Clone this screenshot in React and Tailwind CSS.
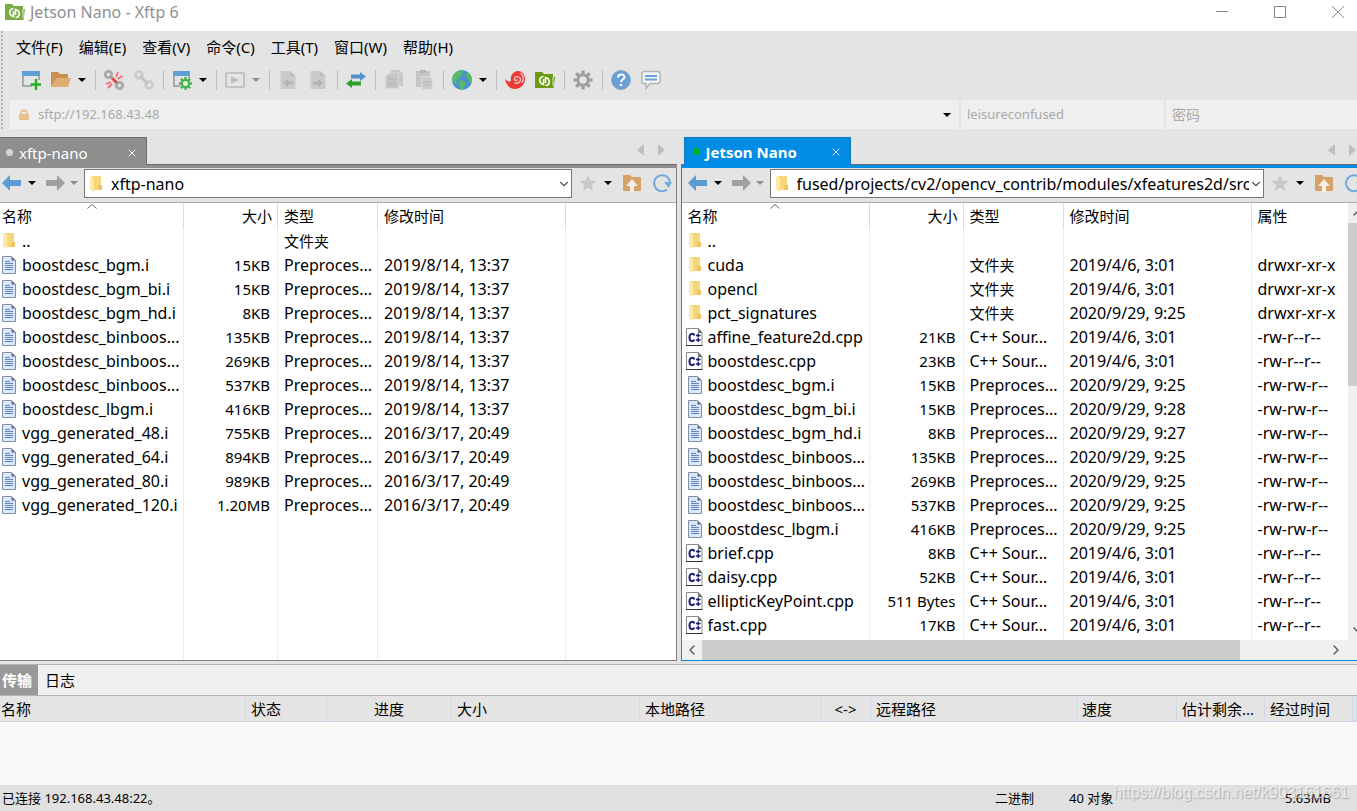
import { ChevronDown, ChevronLeft, ChevronRight, ChevronUp, X } from "lucide-react";

const menus = ["文件(F)", "编辑(E)", "查看(V)", "命令(C)", "工具(T)", "窗口(W)", "帮助(H)"];

const DIR = "文件夹";
const PRE = "Preproces...";
const CPP = "C++ Sour...";

const localFiles = [
  ["folder", "..", "", DIR, ""],
  ["text", "boostdesc_bgm.i", "15KB", PRE, "2019/8/14, 13:37"],
  ["text", "boostdesc_bgm_bi.i", "15KB", PRE, "2019/8/14, 13:37"],
  ["text", "boostdesc_bgm_hd.i", "8KB", PRE, "2019/8/14, 13:37"],
  ["text", "boostdesc_binboos...", "135KB", PRE, "2019/8/14, 13:37"],
  ["text", "boostdesc_binboos...", "269KB", PRE, "2019/8/14, 13:37"],
  ["text", "boostdesc_binboos...", "537KB", PRE, "2019/8/14, 13:37"],
  ["text", "boostdesc_lbgm.i", "416KB", PRE, "2019/8/14, 13:37"],
  ["text", "vgg_generated_48.i", "755KB", PRE, "2016/3/17, 20:49"],
  ["text", "vgg_generated_64.i", "894KB", PRE, "2016/3/17, 20:49"],
  ["text", "vgg_generated_80.i", "989KB", PRE, "2016/3/17, 20:49"],
  ["text", "vgg_generated_120.i", "1.20MB", PRE, "2016/3/17, 20:49"],
];

const remoteFiles = [
  ["folder", "..", "", "", "", ""],
  ["folder", "cuda", "", DIR, "2019/4/6, 3:01", "drwxr-xr-x"],
  ["folder", "opencl", "", DIR, "2019/4/6, 3:01", "drwxr-xr-x"],
  ["folder", "pct_signatures", "", DIR, "2020/9/29, 9:25", "drwxr-xr-x"],
  ["cpp", "affine_feature2d.cpp", "21KB", CPP, "2019/4/6, 3:01", "-rw-r--r--"],
  ["cpp", "boostdesc.cpp", "23KB", CPP, "2019/4/6, 3:01", "-rw-r--r--"],
  ["text", "boostdesc_bgm.i", "15KB", PRE, "2020/9/29, 9:25", "-rw-rw-r--"],
  ["text", "boostdesc_bgm_bi.i", "15KB", PRE, "2020/9/29, 9:28", "-rw-rw-r--"],
  ["text", "boostdesc_bgm_hd.i", "8KB", PRE, "2020/9/29, 9:27", "-rw-rw-r--"],
  ["text", "boostdesc_binboos...", "135KB", PRE, "2020/9/29, 9:25", "-rw-rw-r--"],
  ["text", "boostdesc_binboos...", "269KB", PRE, "2020/9/29, 9:25", "-rw-rw-r--"],
  ["text", "boostdesc_binboos...", "537KB", PRE, "2020/9/29, 9:25", "-rw-rw-r--"],
  ["text", "boostdesc_lbgm.i", "416KB", PRE, "2020/9/29, 9:25", "-rw-rw-r--"],
  ["cpp", "brief.cpp", "8KB", CPP, "2019/4/6, 3:01", "-rw-r--r--"],
  ["cpp", "daisy.cpp", "52KB", CPP, "2019/4/6, 3:01", "-rw-r--r--"],
  ["cpp", "ellipticKeyPoint.cpp", "511 Bytes", CPP, "2019/4/6, 3:01", "-rw-r--r--"],
  ["cpp", "fast.cpp", "17KB", CPP, "2019/4/6, 3:01", "-rw-r--r--"],
];

function Svg({ size = 20, children }) {
  return (
    <svg width={size} height={size} viewBox={`0 0 ${size} ${size}`} fill="none" className="shrink-0" aria-hidden="true">
      {children}
    </svg>
  );
}

function Gear({ cx, cy, r, color, hole }) {
  return (
    <g>
      {[0, 45, 90, 135, 180, 225, 270, 315].map((a) => (
        <rect key={a} x={cx - r * 0.18} y={cy - r} width={r * 0.36} height={r * 0.5} fill={color} transform={`rotate(${a} ${cx} ${cy})`} />
      ))}
      <circle cx={cx} cy={cy} r={r * 0.54} stroke={color} strokeWidth={r * 0.3} fill={hole} />
    </g>
  );
}

function NewSessionIcon() {
  return (
    <Svg>
      <path d="M2 5v11h9M18 5v5" stroke="#a6a8ab" strokeWidth="2" />
      <rect x="1" y="1" width="18" height="5" fill="#5f9fd6" />
      <path d="M15 9v11M9.500 14.500H20" stroke="#22b022" strokeWidth="2.400" />
    </Svg>
  );
}

function OpenIcon() {
  return (
    <Svg>
      <path d="M0 2h7l2 2h8v4H6L0 17z" fill="#c8914f" />
      <path d="M5 8h15l-3 9H0z" fill="#dfae72" />
    </Svg>
  );
}

function DisconnectIcon() {
  return (
    <Svg>
      <circle cx="4.500" cy="4.500" r="3.200" stroke="#a9a9a9" strokeWidth="2.800" />
      <circle cx="15.500" cy="15.500" r="3.200" stroke="#a9a9a9" strokeWidth="2.800" />
      <path d="M6 6l3 3M11 11l3 3" stroke="#9c9c9c" strokeWidth="2.600" />
      <path d="M8.500 8.500l4 4" stroke="#e8404a" strokeWidth="3" />
      <path d="M12 7l2-5M13.500 9l5-3M7 12l-5 2M8 14l-4 4" stroke="#ee6b73" strokeWidth="1.800" />
    </Svg>
  );
}

function LinkIcon() {
  return (
    <Svg>
      <circle cx="5" cy="5" r="3.500" stroke="#cacaca" strokeWidth="2.500" />
      <circle cx="15" cy="15" r="3.500" stroke="#cacaca" strokeWidth="2.500" />
      <path d="M6 6l8 8" stroke="#c0c0c0" strokeWidth="2.800" />
    </Svg>
  );
}

function PropertiesIcon() {
  return (
    <Svg>
      <path d="M2 5v11h6M17 5v3" stroke="#a6a8ab" strokeWidth="2" />
      <rect x="1" y="1" width="17" height="5" fill="#5f9fd6" />
      <Gear cx={13.500} cy={13.500} r={6.500} color="#43b14b" hole="#e8f3e8" />
    </Svg>
  );
}

function PlayIcon() {
  return (
    <Svg>
      <rect x="1" y="3" width="18" height="14" rx="1" stroke="#c2c2c2" strokeWidth="2" />
      <path d="M6 6.500l8 3.500-8 3.500z" fill="#bcbcbc" />
    </Svg>
  );
}

function FileArrowIcon({ right }) {
  return (
    <Svg>
      <path d="M2.500 1h9.500l5.500 5v13h-15z" fill="#cacaca" />
      <path d="M12 1v5h5.500" fill="#bcbcbc" />
      {right ? (
        <path d="M5 11.500h5v-3l5 4.500-5 4.500v-3H5z" fill="#b3b3b3" />
      ) : (
        <path d="M15 11.500h-5v-3L5 13l5 4.500v-3h5z" fill="#b3b3b3" />
      )}
    </Svg>
  );
}

function TransferIcon() {
  return (
    <Svg>
      <path d="M5 4.500h9V2l6 4.500-6 4.500V8.500H5z" fill="#5590d0" />
      <path d="M15 11.500H6V9l-6 4.500L6 18v-2.500h9z" fill="#2ba32b" />
    </Svg>
  );
}

function CopyIcon() {
  return (
    <Svg>
      <path d="M7 0h8l4 4v12H7z" fill="#c8c8c8" />
      <path d="M1.500 7l4-4h9v15.500h-13z" fill="#c6c6c6" stroke="#d8d8d8" />
      <path d="M4 9h8M4 12h8M4 15h8" stroke="#b4b4b4" />
    </Svg>
  );
}

function PasteIcon() {
  return (
    <Svg>
      <path d="M2 1h14v16H2z" fill="#c6c6c6" />
      <path d="M6 0h6v3H6z" fill="#b6b6b6" />
      <path d="M7.500 6.500h8l3 3v10h-11z" fill="#cbcbcb" stroke="#dedede" />
      <path d="M10 12h6M10 15h6" stroke="#b4b4b4" />
    </Svg>
  );
}

function GlobeIcon() {
  return (
    <Svg>
      <circle cx="10" cy="10" r="10" fill="#4d8fd1" />
      <path d="M3 3C6 0 9 0 11 .500L10 3l1 2-3 1-1 3-3 1 1 2-2 2C-1 10 0 6 3 3z" fill="#55bb66" />
      <path d="M8 10l4 1 2 3-2 3-1 3H9l-1-4-2-2zM14 3l3 0c2 2 3 5 3 7l-2 3-2-2 0-3-2-2z" fill="#55bb66" />
    </Svg>
  );
}

function ShellIcon() {
  return (
    <Svg>
      <path d="M0 9c2 2 4 3 6 2-1-5 2-10 7-10 4 0 7 3 7 8 0 6-5 10-10 10S1 15 0 9z" fill="#ee3a33" />
      <path
        d="M9.500 12.500c2 2 6 0 6-3s-5-4-6-1c-.500 2 2 3 3 1M15.500 3c3 2 4 7 1 10"
        stroke="#f3d2d0"
        strokeWidth="1.200"
      />
    </Svg>
  );
}

function XftpIcon({ color = "#6a9a14" }) {
  return (
    <Svg>
      <path d="M0 2h7l2 2h9v3h2l-1.500 11H0z" fill={color} />
      <path d="M18 7v9" stroke="#e4ecd4" />
      <path d="M8.500 6.500c-5 .500-5 7 0 8V9M10.500 15.500c5-.500 5-7 0-8V13" stroke="#fff" strokeWidth="1.600" />
    </Svg>
  );
}

function HelpIcon() {
  return (
    <Svg>
      <circle cx="10" cy="10" r="9.500" fill="#6a9fd6" stroke="#88a8cc" />
      <path d="M7 7.500c0-4 6.500-4 6.500-.500 0 2.500-3.500 2.300-3.500 5" stroke="#fff" strokeWidth="2" />
      <circle cx="10" cy="15" r="1.300" fill="#fff" />
    </Svg>
  );
}

function ChatIcon() {
  return (
    <Svg>
      <path d="M2 1.500h16l1 1.500v9l-1 1.500h-9l-4 5v-5H2L1 12V3z" fill="#f3f5f7" stroke="#b2b4b6" strokeWidth="1.500" />
      <path d="M4 6h12M4 9.500h12" stroke="#69a3dc" strokeWidth="2" />
    </Svg>
  );
}

function LockIcon() {
  return (
    <svg width="12" height="12" viewBox="0 0 12 12" fill="none" className="shrink-0" aria-hidden="true">
      <path d="M3 6V4c0-3.500 6-3.500 6 0v2" stroke="#e8c08a" strokeWidth="1.600" />
      <rect x="1" y="5" width="10" height="6" rx="1" fill="#e8c08a" />
    </svg>
  );
}

function FileIcon({ kind }) {
  if (kind === "folder") {
    return (
      <Svg size={18}>
        <path d="M5 1h9v10l1 4H5z" fill="#f7d678" />
        <path d="M12 10h3v5h-4z" fill="#ecc35c" />
        <path d="M3 1l4 2v14l-4-2z" fill="#fde9a9" />
      </Svg>
    );
  }
  if (kind === "cpp") {
    return (
      <Svg size={18}>
        <path d="M.500.500h12l3.500 4v13H.500z" fill="#fff" stroke="#8a8a8a" />
        <path d="M12 0l4.500 5H12z" fill="#777" />
        <path d="M0 17.500h16.500" stroke="#333" />
        <path d="M8.500 7.500c-1-2.500-5-2.500-5 2s4 4.500 5 2" stroke="#1b1b7a" strokeWidth="2" />
        <path d="M10 7.500h4.500M12.200 5.500v4M10 12h4.500M12.200 10v4" stroke="#1b1b7a" strokeWidth="1.400" />
      </Svg>
    );
  }
  return (
    <Svg size={18}>
      <path d="M2.500.500h9l4 4v13h-13z" fill="#dce7f5" stroke="#7f8fa8" />
      <path d="M11.500.500v4h4z" fill="#5d6c86" />
      <path d="M5 5.500h5M5 7.500h8M5 9.500h8M5 11.500h8M5 13.500h8" stroke="#5b86c8" />
    </Svg>
  );
}

function Caret({ color = "#000" }) {
  return (
    <svg width="8" height="4" viewBox="0 0 8 4" className="shrink-0" aria-hidden="true">
      <path d="M0 0h8L4 4z" fill={color} />
    </svg>
  );
}

function Tool({ label, children }) {
  return (
    <button aria-label={label} className="flex w-[30px] items-center justify-center">
      {children}
    </button>
  );
}

function ToolCaret({ label, color }) {
  return (
    <button aria-label={label} className="flex h-5 w-[15px] items-center pl-0.5">
      <Caret color={color} />
    </button>
  );
}

function Separator() {
  return (
    <div className="flex h-5 w-2 justify-center">
      <div className="w-px bg-[#bcbcbc]" />
    </div>
  );
}

function Toolbar() {
  return (
    <div className="flex h-9 items-center pl-3">
      <Tool label="新建"><NewSessionIcon /></Tool>
      <Tool label="打开"><OpenIcon /></Tool>
      <ToolCaret label="打开选项" />
      <Separator />
      <Tool label="断开"><DisconnectIcon /></Tool>
      <Tool label="重新连接"><LinkIcon /></Tool>
      <Separator />
      <Tool label="属性"><PropertiesIcon /></Tool>
      <ToolCaret label="属性选项" />
      <Separator />
      <Tool label="运行"><PlayIcon /></Tool>
      <ToolCaret label="运行选项" color="#8c8c8c" />
      <Separator />
      <Tool label="传输到左侧"><FileArrowIcon /></Tool>
      <Tool label="传输到右侧"><FileArrowIcon right /></Tool>
      <Separator />
      <Tool label="同步"><TransferIcon /></Tool>
      <Separator />
      <Tool label="复制"><CopyIcon /></Tool>
      <Tool label="粘贴"><PasteIcon /></Tool>
      <Separator />
      <Tool label="语言"><GlobeIcon /></Tool>
      <ToolCaret label="语言选项" />
      <Separator />
      <Tool label="Xshell"><ShellIcon /></Tool>
      <Tool label="Xftp"><XftpIcon /></Tool>
      <Separator />
      <Tool label="选项"><Svg><Gear cx={10} cy={10} r={9.500} color="#9f9f9f" hole="#e4e4e4" /></Svg></Tool>
      <Separator />
      <Tool label="帮助"><HelpIcon /></Tool>
      <Tool label="反馈"><ChatIcon /></Tool>
    </div>
  );
}

function AddressBar() {
  return (
    <div className="mt-0.5 flex h-[29px] gap-0.5 pl-1.5 text-[13px] text-[#a9a9a9]">
      <label className="flex flex-1 items-center bg-[#efefef] pl-2">
        <LockIcon />
        <input aria-label="主机" defaultValue="sftp://192.168.43.48" className="ml-2 min-w-0 flex-1 outline-none" />
        <button aria-label="历史记录" className="flex w-6 justify-center">
          <Caret />
        </button>
      </label>
      <input aria-label="用户名" defaultValue="leisureconfused" className="w-[203px] bg-[#efefef] px-1.5 outline-none" />
      <input aria-label="密码" placeholder="密码" className="w-[191px] bg-[#efefef] px-1.5 text-[14px] outline-none placeholder:text-[#a9a9a9]" />
    </div>
  );
}

function TabArrows() {
  return (
    <div className="ml-auto flex gap-[14px] self-center pt-1.5 pr-3">
      <button aria-label="上一个标签">
        <svg width="7" height="12" viewBox="0 0 7 12"><path d="M7 0v12L0 6z" fill="#bfbfbf" /></svg>
      </button>
      <button aria-label="下一个标签">
        <svg width="7" height="12" viewBox="0 0 7 12"><path d="M0 0v12l7-6z" fill="#bfbfbf" /></svg>
      </button>
    </div>
  );
}

function NavBar({ path, remote }) {
  return (
    <div className={`flex h-[35px] items-start border-b border-[#adadad] pt-px ${remote ? "pl-1.5" : "pl-0.5"}`}>
      <div className="flex h-[28px] items-center">
        <button aria-label="后退">
          <Svg>
            <path d="M0 10l8-8v5h11v6H8v5z" fill="#5b9bd5" />
          </Svg>
        </button>
        <button aria-label="后退历史" className="ml-1.5"><Caret /></button>
        <button aria-label="前进" className="ml-2.5">
          <Svg>
            <path d="M19 10l-8-8v5H0v6h11v5z" fill="#a0a0a0" />
          </Svg>
        </button>
        <button aria-label="前进历史" className="ml-1"><Caret color="#8c8c8c" /></button>
      </div>
      <label className="ml-1.5 flex h-[29px] min-w-0 flex-1 items-center border border-[#777] bg-white pl-0.5">
        <FileIcon kind="folder" />
        <input aria-label="路径" defaultValue={path} className="ml-1.5 min-w-0 flex-1 text-[16px] text-black outline-none" />
        <button aria-label="路径列表" className="flex w-[14px] justify-center">
          <ChevronDown size={14} strokeWidth={2} color="#555" />
        </button>
      </label>
      <div className="flex h-[28px] items-center pl-1.5">
        <button aria-label="收藏">
          <Svg>
            <path d="M10 2l2.400 5.600 6 .400-4.600 4 1.500 6-5.300-3.300L4.700 18l1.500-6L1.600 8l6-.400z" fill="#c8c8c8" />
          </Svg>
        </button>
        <button aria-label="收藏列表" className="ml-1.5"><Caret /></button>
        <button aria-label="上级目录" className="ml-2.5">
          <Svg>
            <path d="M1 2h7l2 2h9v14H1z" fill="#d6a268" />
            <path d="M10 6l6 7h-4v6H8v-6H4z" fill="#f3eee6" />
          </Svg>
        </button>
        <button aria-label="刷新" className="ml-2.5">
          <Svg>
            <path d="M15 16.500A8 8 0 1 1 18 9" stroke="#72a9de" strokeWidth="2" />
            <path d="M12 9h8l-3.500 6z" fill="#72a9de" />
          </Svg>
        </button>
        <div className="w-1" />
      </div>
    </div>
  );
}

function FileTable({ files, remote }) {
  const line = "border-r border-[#e6eff8]";
  const headLine = "border-r border-[#dcdcdc]";
  return (
    <table className="h-full w-full table-fixed border-separate border-spacing-0 bg-white text-[15px] leading-6 whitespace-nowrap">
      <colgroup>
        <col className={remote ? "w-[188px]" : "w-[184px]"} />
        <col className="w-[94px]" />
        <col className="w-[100px]" />
        <col className="w-[188px]" />
        <col />
      </colgroup>
      <thead>
        <tr className="h-[26px] text-left">
          <th className={`relative font-normal ${remote ? "pl-1.5" : "pl-0.5"} ${headLine}`}>
            名称
            <svg width="10" height="5" viewBox="0 0 10 5" className="absolute top-px left-1/2 -translate-x-1/2" aria-hidden="true">
              <path d="M.500 4.500L5 .500l4.500 4" fill="none" stroke="#666" />
            </svg>
          </th>
          <th className={`pr-[5px] text-right font-normal ${headLine}`}>大小</th>
          <th className={`pl-1.5 font-normal ${headLine}`}>类型</th>
          <th className={`pl-1.5 font-normal ${headLine}`}>修改时间</th>
          <th className="pl-1.5 font-normal">{remote && "属性"}</th>
        </tr>
      </thead>
      <tbody>
        {files.map(([kind, name, size, type, date, attr], i) => (
          <tr key={i} className="h-6">
            <td className={`${line} ${remote ? "pl-1" : ""}`}>
              <div className="flex items-center gap-1 text-[16px] leading-6">
                <FileIcon kind={kind} />
                {name}
              </div>
            </td>
            <td className={`pr-[7px] text-right ${line}`}>{size}</td>
            <td className={`pl-1.5 ${line} ${type === DIR ? "" : "text-[16px]"}`}>{type}</td>
            <td className={`pl-1.5 text-[16px] ${line}`}>{date}</td>
            <td className="pl-1.5 text-[16px]">{attr}</td>
          </tr>
        ))}
        <tr>
          <td className={line} />
          <td className={line} />
          <td className={line} />
          <td className={line} />
          <td />
        </tr>
      </tbody>
    </table>
  );
}

function LocalPane() {
  return (
    <section className="flex min-w-0 flex-1 flex-col">
      <div className="flex h-[35px] items-end">
        <div className="relative -mb-px flex h-7 w-[147px] items-center border-t border-r border-[#6e6e6e] bg-[#8e8e8e] pt-0.5 pr-2 pl-1.5 text-white">
          <span className="mr-1.5 size-[7px] rounded-full bg-[#d4d4d4]" />
          <button className="text-[15px] leading-6">xftp-nano</button>
          <button aria-label="关闭" className="ml-auto"><X size={12} strokeWidth={2} /></button>
        </div>
        <TabArrows />
      </div>
      <div className="h-1 border-t border-[#6e6e6e] bg-[#8e8e8e]" />
      <div className="flex min-h-0 flex-1 flex-col border-r border-b border-[#808080]">
        <NavBar path="xftp-nano" />
        <div className="min-h-0 flex-1 bg-white">
          <FileTable files={localFiles} />
        </div>
      </div>
    </section>
  );
}

function RemotePane() {
  return (
    <section className="flex min-w-0 flex-1 flex-col overflow-hidden">
      <div className="flex min-h-0 min-w-[687px] flex-1 flex-col">
        <div className="flex h-[35px] items-end pl-[3px]">
          <div className="relative -mb-px flex h-7 w-[167px] items-center border border-b-0 border-[#1577bd] bg-[#008be5] pr-2 pl-2 text-white">
            <span className="mr-1.5 size-[7px] rounded-full bg-[#00b818]" />
            <button className="text-[15px] leading-6 font-bold">Jetson Nano</button>
            <button aria-label="关闭" className="ml-auto"><X size={12} strokeWidth={2} /></button>
          </div>
          <TabArrows />
        </div>
        <div className="h-1 border-t border-[#6e6e6e] bg-[#008be5]" />
        <div className="flex min-h-0 flex-1 flex-col border-b border-l border-b-[#008be5] border-l-[#707070]">
          <NavBar path="fused/projects/cv2/opencv_contrib/modules/xfeatures2d/src" remote />
          <div className="flex min-h-0 flex-1">
            <div className="min-w-0 flex-1 bg-white">
              <FileTable files={remoteFiles} remote />
            </div>
            <div className="flex w-5 flex-col items-center bg-[#f0f0f0]">
              <ChevronUp size={16} className="my-0.5" color="#555" />
              <div className="h-[163px] w-full bg-[#cdcdcd]" />
              <ChevronDown size={16} className="mt-auto mb-0.5" color="#555" />
            </div>
          </div>
          <div className="flex h-5 items-center bg-[#f0f0f0] pr-5">
            <ChevronLeft size={16} color="#555" className="mx-0.5" />
            <div className="h-full w-[538px] bg-[#cdcdcd]" />
            <ChevronRight size={16} color="#555" className="mr-1 ml-auto" />
          </div>
        </div>
      </div>
    </section>
  );
}

function TransferTable() {
  const cell = "border-r border-b border-[#cfd8e4] font-normal";
  return (
    <table className="w-full table-fixed border-separate border-spacing-0 bg-[#e4e4e4] text-[15px] leading-6 whitespace-nowrap">
      <colgroup>
        <col className="w-[246px]" />
        <col className="w-[81px]" />
        <col className="w-[125px]" />
        <col className="w-[188px]" />
        <col className="w-[181px]" />
        <col className="w-[50px]" />
        <col className="w-[206px]" />
        <col className="w-[100px]" />
        <col className="w-[88px]" />
        <col className="w-[88px]" />
        <col />
      </colgroup>
      <thead>
        <tr className="h-[26px] text-left">
          <th className={`pl-px ${cell}`}>名称</th>
          <th className={`pl-[5px] ${cell}`}>状态</th>
          <th className={`text-center ${cell}`}>进度</th>
          <th className={`pl-[5px] ${cell}`}>大小</th>
          <th className={`pl-[5px] ${cell}`}>本地路径</th>
          <th className={`text-center ${cell}`}>&lt;-&gt;</th>
          <th className={`pl-[5px] ${cell}`}>远程路径</th>
          <th className={`pl-[5px] ${cell}`}>速度</th>
          <th className={`pl-[5px] ${cell}`}>估计剩余...</th>
          <th className={`pl-[5px] ${cell}`}>经过时间</th>
          <th className={cell} />
        </tr>
      </thead>
    </table>
  );
}

function WindowButton({ label, d }) {
  return (
    <button aria-label={label}>
      <svg width="12" height="12" viewBox="0 0 12 12" fill="none" stroke="#888" aria-hidden="true">
        <path d={d} />
      </svg>
    </button>
  );
}

export default function App() {
  return (
    <div className="relative flex h-screen min-h-[811px] flex-col overflow-hidden bg-[#e4e4e4] font-['Noto_Sans','Noto_Sans_CJK_SC',sans-serif] text-black">
      <header className="flex h-[31px] items-start bg-white pl-[5px] text-[#8f8f8f]">
        <div className="flex h-6 items-center gap-[5px]">
          <XftpIcon color="#7cab45" />
          <h1 className="text-[16px] leading-6">Jetson Nano - Xftp 6</h1>
        </div>
        <div className="ml-auto flex h-6 items-center gap-[46px] pr-[13px]">
          <WindowButton label="最小化" d="M0 5.500h12" />
          <WindowButton label="最大化" d="M.500.500h11v11H.500z" />
          <WindowButton label="关闭" d="M0 0l12 12M12 0L0 12" />
        </div>
      </header>

      <div className="flex">
        <div className="ml-px w-[3px] border-l-2 border-dotted border-[#b5b5b5]" />
        <div className="min-w-0 flex-1">
          <nav className="flex h-[31px] items-center gap-4 pl-3 text-[15px] leading-6">
            {menus.map((m) => (
              <button key={m}>{m}</button>
            ))}
          </nav>
          <Toolbar />
          <AddressBar />
        </div>
      </div>

      <main className="flex min-h-0 flex-1 gap-1">
        <LocalPane />
        <RemotePane />
      </main>

      <footer className="mt-[3px] border-t border-[#b4b4b4]">
        <div className="flex h-[31px] border-b border-[#b4b4b4] bg-[#f0f0f0] text-[15px] leading-6">
          <button className="w-[38px] bg-[#999] pl-0.5 text-left font-bold text-white">传输</button>
          <button className="px-[7px]">日志</button>
        </div>
        <div className="h-[89px] bg-[#f8f8f8]">
          <TransferTable />
        </div>
        <div className="flex h-[26px] items-center bg-[#e0e0e0] pt-0.5 pr-[26px] pl-0.5 text-[13px]">
          <span>已连接 192.168.43.48:22。</span>
          <span className="ml-auto w-[74px]">二进制</span>
          <span className="w-[216px]">40 对象</span>
          <span>5.63MB</span>
        </div>
      </footer>

      <div className="pointer-events-none absolute right-2 bottom-1.5 font-['Liberation_Sans',sans-serif] text-[16px] leading-6 text-white/60 [text-shadow:1px_1px_1px_rgba(120,120,120,0.5)]">
        https://blog.csdn.net/k903161661
      </div>
    </div>
  );
}
